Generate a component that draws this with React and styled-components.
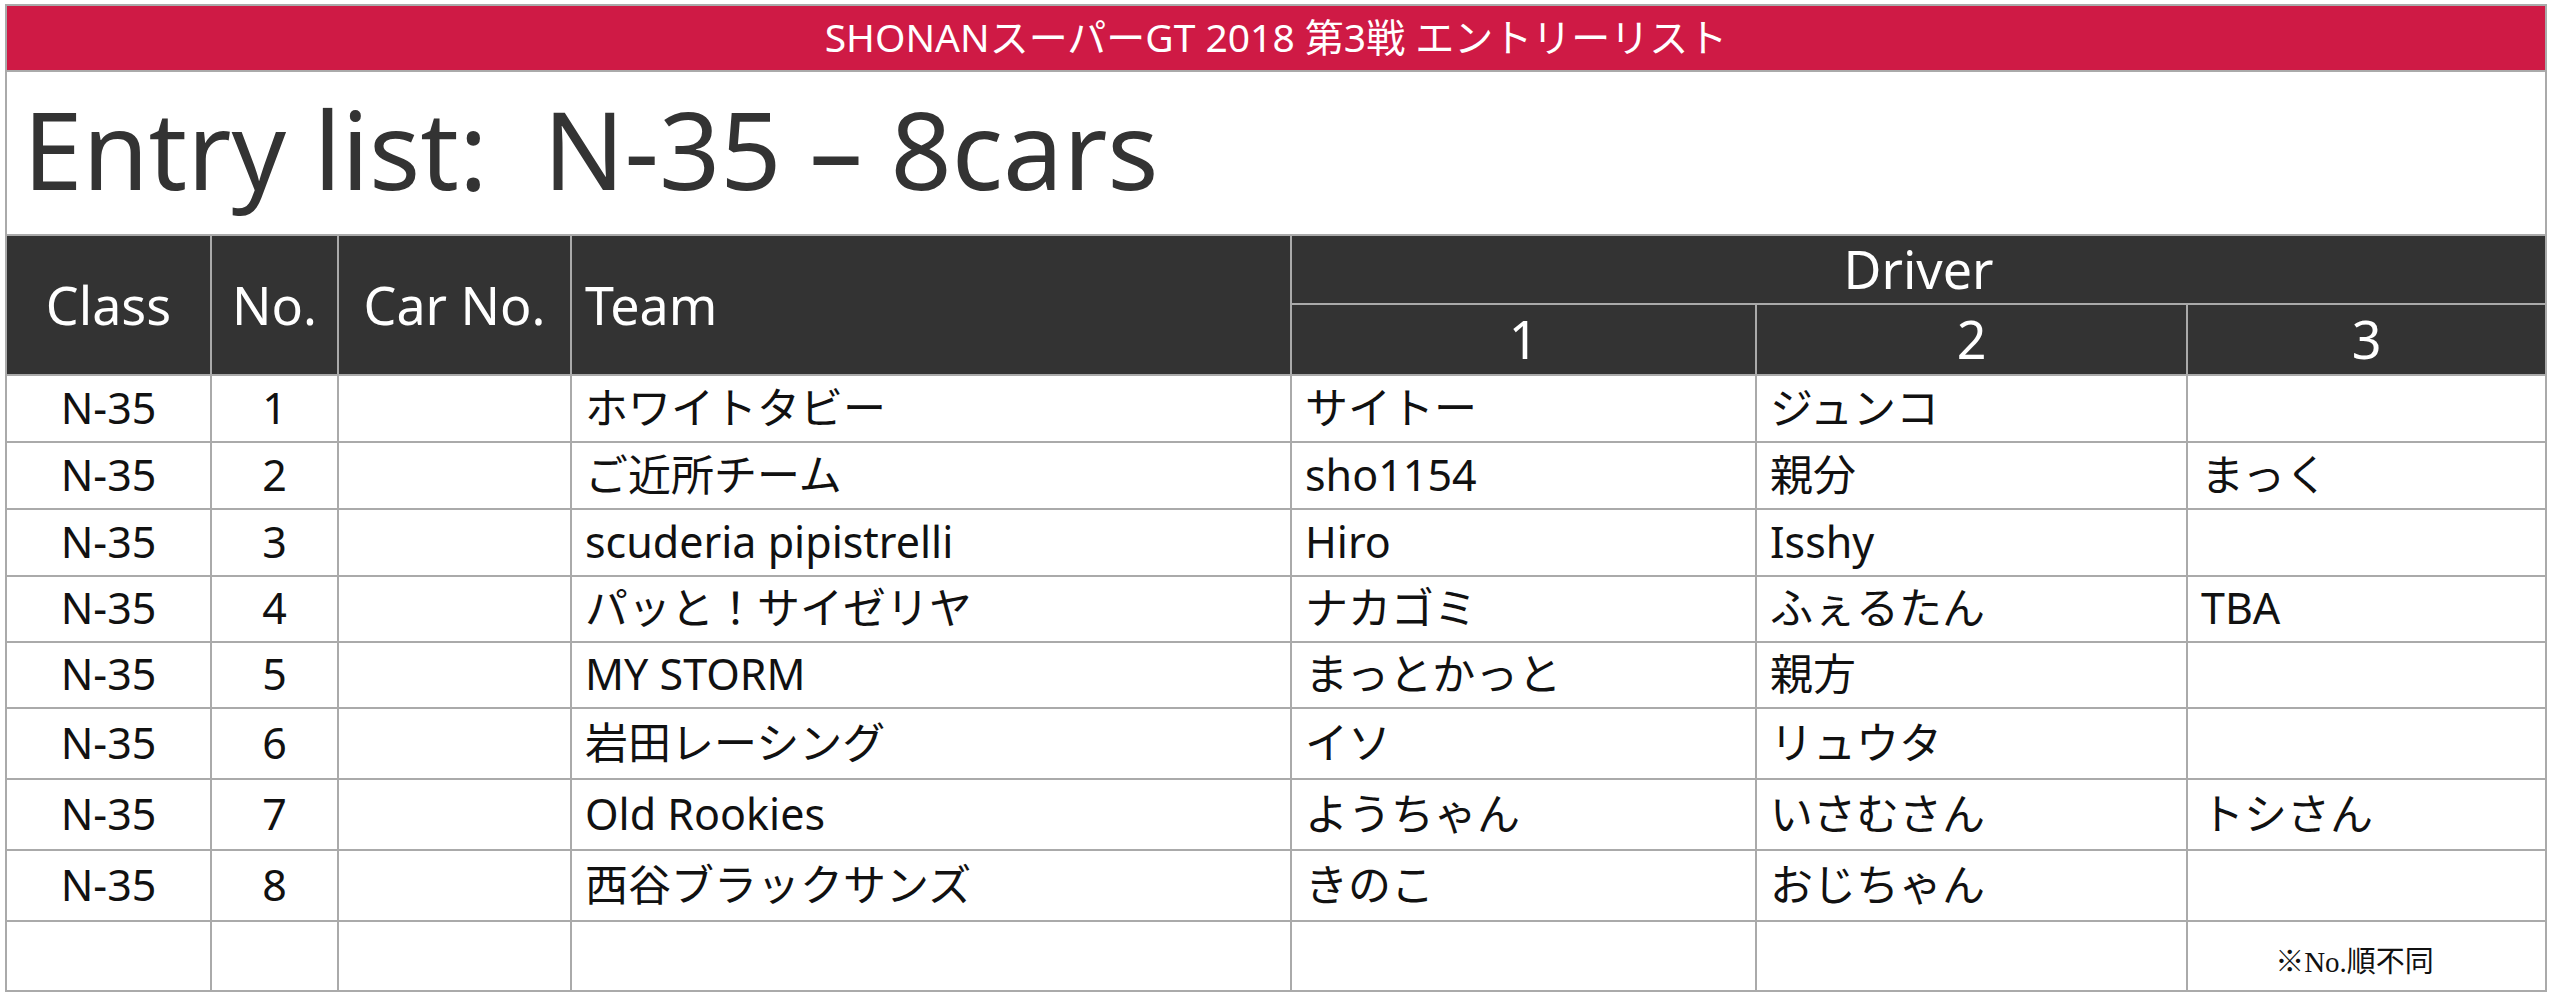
import React from "react";
import styled, { createGlobalStyle } from "styled-components";

const GlobalStyle = createGlobalStyle`
  * {
    box-sizing: border-box;
  }
  body {
    margin: 0;
    background: #ffffff;
    font-family: "Noto Sans", "Noto Sans CJK JP", sans-serif;
  }
`;

const Sheet = styled.div`
  width: 2542px;
  margin: 4px 0 0 5px;
  border: 2px solid #aaaaaa;
  background: #ffffff;
`;

const Banner = styled.div`
  height: 66px;
  display: flex;
  align-items: center;
  justify-content: center;
  padding-bottom: 2px;
  background: #cf1a45;
  border-bottom: 2px solid #aaaaaa;
  color: #ffffff;
  font-size: 39px;
  line-height: 1.2;
`;

const Title = styled.h1`
  margin: 0;
  height: 164px;
  display: flex;
  align-items: center;
  padding: 0 0 8px 16px;
  border-bottom: 2px solid #aaaaaa;
  color: #333333;
  font-size: 107px;
  font-weight: 400;
  line-height: 1.2;
`;

const Table = styled.table`
  width: 100%;
  table-layout: fixed;
  border-collapse: separate;
  border-spacing: 0;
`;

const Th = styled.th`
  height: ${(p) => p.$h}px;
  padding: 0 0 ${(p) => p.$lift || 0}px ${(p) => (p.$left ? 13 : 0)}px;
  background: #333333;
  color: #ffffff;
  font-size: 52px;
  font-weight: 400;
  line-height: 1.2;
  text-align: ${(p) => (p.$left ? "left" : "center")};
  border-right: 2px solid #aaaaaa;
  border-bottom: 2px solid #aaaaaa;
  white-space: nowrap;

  &:last-child {
    border-right: none;
  }
`;

const Row = styled.tr`
  &:last-child td {
    border-bottom: none;
  }
`;

const Td = styled.td`
  height: ${(p) => p.$h}px;
  padding: 0 0 2px ${(p) => (p.$left ? 13 : 0)}px;
  color: #111111;
  font-size: 43px;
  line-height: 1.2;
  text-align: ${(p) => (p.$left ? "left" : "center")};
  border-right: 2px solid #aaaaaa;
  border-bottom: 2px solid #aaaaaa;
  white-space: nowrap;
  overflow: hidden;

  &:last-child {
    border-right: none;
  }
`;

const NoteCell = styled(Td)`
  padding: 0 24px 0 0;
`;

const Note = styled.span`
  font-family: "Liberation Serif", "Noto Sans CJK JP", serif;
  font-size: 29px;
  color: #111111;
`;

const widths = [205, 127, 233, 720, 465, 431, 357];

const entries = [
  { no: 1, team: "ホワイトタビー", d: ["サイトー", "ジュンコ", ""], h: 67 },
  { no: 2, team: "ご近所チーム", d: ["sho1154", "親分", "まっく"], h: 67 },
  { no: 3, team: "scuderia pipistrelli", d: ["Hiro", "Isshy", ""], h: 67 },
  { no: 4, team: "パッと！サイゼリヤ", d: ["ナカゴミ", "ふぇるたん", "TBA"], h: 66 },
  { no: 5, team: "MY STORM", d: ["まっとかっと", "親方", ""], h: 66 },
  { no: 6, team: "岩田レーシング", d: ["イソ", "リュウタ", ""], h: 71 },
  { no: 7, team: "Old Rookies", d: ["ようちゃん", "いさむさん", "トシさん"], h: 71 },
  { no: 8, team: "西谷ブラックサンズ", d: ["きのこ", "おじちゃん", ""], h: 71 },
];

const App = () => {
  return (
    <>
      <GlobalStyle />
      <Sheet>
        <Banner>SHONANスーパーGT 2018 第3戦 エントリーリスト</Banner>
        <Title>Entry list:&nbsp; N-35 – 8cars</Title>
        <Table>
          <colgroup>
            {widths.map((w, i) => (
              <col key={i} style={{ width: w }} />
            ))}
          </colgroup>
          <thead>
            <tr>
              <Th rowSpan={2} $h={69}>Class</Th>
              <Th rowSpan={2} $h={69}>No.</Th>
              <Th rowSpan={2} $h={69}>Car No.</Th>
              <Th rowSpan={2} $h={69} $left>Team</Th>
              <Th colSpan={3} $h={69}>Driver</Th>
            </tr>
            <tr>
              <Th $h={71}>1</Th>
              <Th $h={71}>2</Th>
              <Th $h={71}>3</Th>
            </tr>
          </thead>
          <tbody>
            {entries.map((e) => (
              <Row key={e.no}>
                <Td $h={e.h}>N-35</Td>
                <Td $h={e.h}>{e.no}</Td>
                <Td $h={e.h} />
                <Td $h={e.h} $left>{e.team}</Td>
                {e.d.map((name, i) => (
                  <Td key={i} $h={e.h} $left>{name}</Td>
                ))}
              </Row>
            ))}
            <Row>
              <Td $h={68} />
              <Td $h={68} />
              <Td $h={68} />
              <Td $h={68} />
              <Td $h={68} />
              <Td $h={68} />
              <NoteCell $h={68}>
                <Note>※No.順不同</Note>
              </NoteCell>
            </Row>
          </tbody>
        </Table>
      </Sheet>
    </>
  );
};

export default App;
